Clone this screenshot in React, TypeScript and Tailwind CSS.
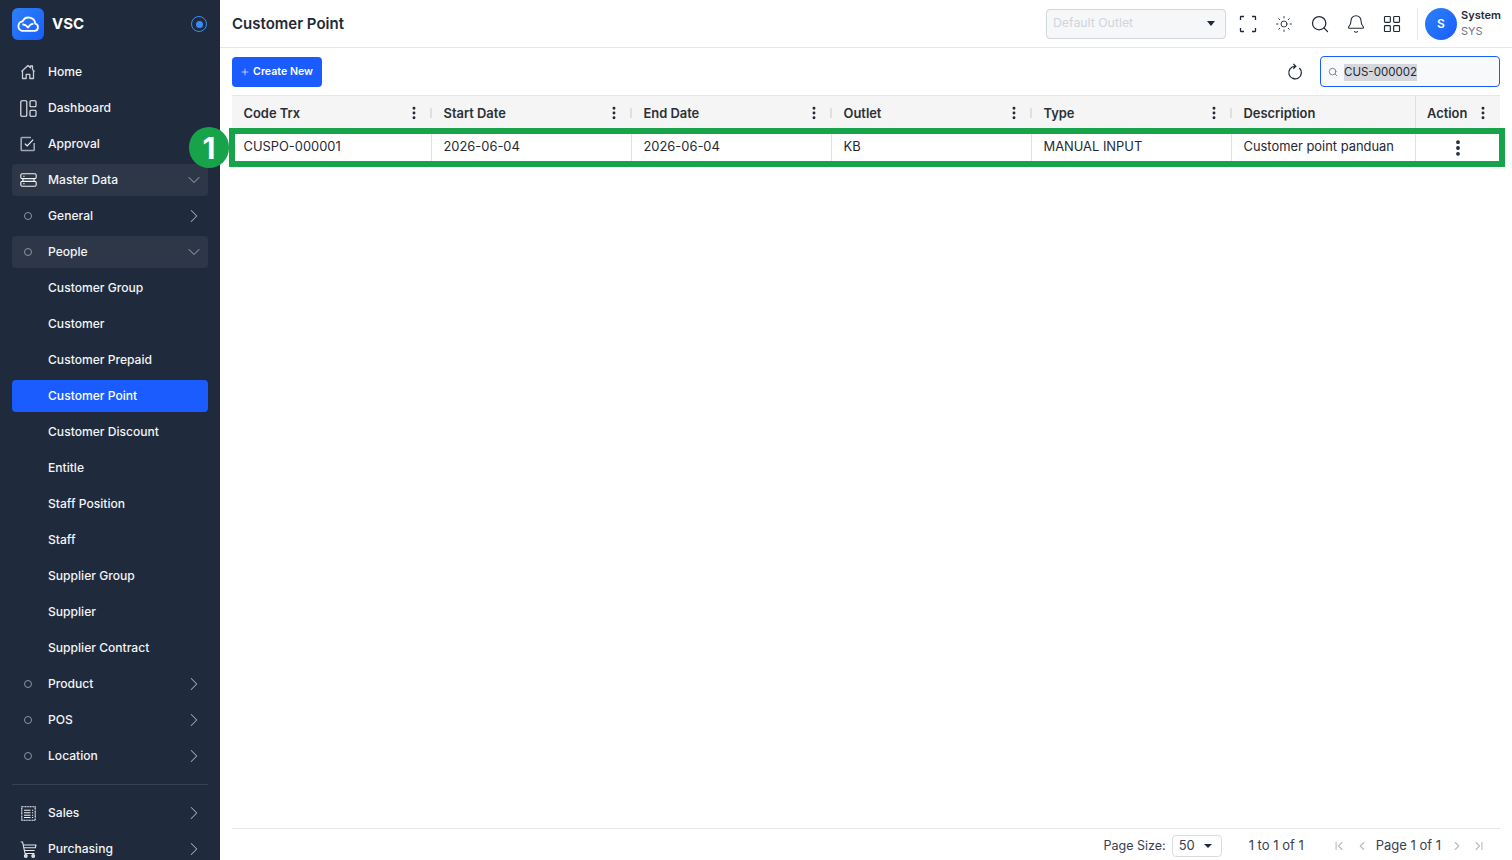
import {
  Bell,
  ChevronDown,
  ChevronFirst,
  ChevronLast,
  ChevronLeft,
  ChevronRight,
  EllipsisVertical,
  LayoutGrid,
  Plus,
  Search,
  Sun,
} from "lucide-react";
import type { ReactNode } from "react";

function Dot() {
  return <span className="h-2 w-2 rounded-full border border-[#8b95a5]" />;
}

function HomeIcon() {
  return (
    <svg width="16" height="16" viewBox="0 0 16 16" fill="none" stroke="#c9ced6" strokeWidth="1.3" strokeLinejoin="round">
      <path d="M1.5 7.5 8 1.5l2.5 2.3V2h2v3.6l2 1.9" />
      <path d="M2.5 6.8V14.5h3.7v-4.2h3.6v4.2h3.7V6.8" />
    </svg>
  );
}

function DashIcon() {
  return (
    <svg width="17" height="17" viewBox="0 0 17 17" fill="none" stroke="#f3f4f6" strokeWidth="1.1">
      <rect x="0.8" y="0.8" width="6" height="15.4" rx="1" />
      <rect x="10" y="0.8" width="6" height="6" rx="1" />
      <rect x="10" y="10.2" width="6" height="6" rx="1" />
    </svg>
  );
}

function ApprovalIcon() {
  return (
    <svg width="16" height="16" viewBox="0 0 16 16" fill="none" strokeWidth="1.2">
      <path d="M11 1.5H2a.8.8 0 0 0-.8.8v11.4a.8.8 0 0 0 .8.8h11.4a.8.8 0 0 0 .8-.8V7" stroke="#a2a8b2" strokeWidth="1.6" />
      <path d="m4.8 7.6 2.4 2.3 6-6.2" stroke="#f3f4f6" />
    </svg>
  );
}

function MasterIcon() {
  return (
    <svg width="17" height="14" viewBox="0 0 17 14" fill="none" stroke="#f3f4f6" strokeWidth="1.1">
      <rect x="0.8" y="0.8" width="15.4" height="4.8" rx="1.4" />
      <rect x="0.8" y="8.4" width="15.4" height="4.8" rx="1.4" />
      <path d="M3 5.6v2.8M14 5.6v2.8M3.2 3.2h1.4M3.2 10.8h1.4" />
    </svg>
  );
}

function SalesIcon() {
  return (
    <svg width="15" height="15" viewBox="0 0 15 15" fill="none" stroke="#f3f4f6" strokeWidth="1.1">
      <rect x="0.8" y="0.8" width="13.4" height="13.4" strokeDasharray="1.2 0.4" />
      <path d="M3 4.2h6.5M3 6.7h6.5M3 9.2h6.5M3 11.5h6.5M11 4.2h1.2M11 6.7h1.2M11 9.2h1.2M11 11.5h1.2" />
    </svg>
  );
}

function CartIcon() {
  return (
    <svg width="17" height="17" viewBox="0 0 17 17" fill="none" stroke="#e5e7eb" strokeWidth="1.1" strokeLinejoin="round">
      <path d="M0.8 1h1.8l2.4 11.5h9.5" />
      <path d="M3.3 4h12.7l-.7 2.8H3.9M4.4 9.5h10.2" />
      <circle cx="5.8" cy="15" r="1.4" fill="#c9ced6" />
      <circle cx="13.2" cy="15" r="1.4" fill="#c9ced6" />
    </svg>
  );
}

function NavItem({
  icon,
  label,
  arrow,
  open,
  active,
}: {
  icon?: ReactNode;
  label: string;
  arrow?: "right" | "down";
  open?: boolean;
  active?: boolean;
}) {
  return (
    <div
      className={`flex h-8 shrink-0 items-center rounded-[4px] pr-[3px] text-[12.1px] leading-none font-medium ${
        active ? "bg-[#1a5cff] text-white" : open ? "bg-[#2d3748] text-[#f3f4f6]" : "text-[#f3f4f6]"
      }`}
    >
      <span className="mr-1 flex w-8 shrink-0 items-center justify-center">{icon}</span>
      <span className="flex-1">{label}</span>
      <span className="flex w-[22px] justify-center">
        {arrow === "right" && <ChevronRight className="h-[22px] w-[22px] text-[#a7adb7]" strokeWidth={1.1} />}
        {arrow === "down" && <ChevronDown className="h-5 w-5 text-[#a7adb7]" strokeWidth={1.2} />}
      </span>
    </div>
  );
}

function Sidebar() {
  const people = [
    "Customer Group",
    "Customer",
    "Customer Prepaid",
    "Customer Point",
    "Customer Discount",
    "Entitle",
    "Staff Position",
    "Staff",
    "Supplier Group",
    "Supplier",
    "Supplier Contract",
  ];

  return (
    <aside className="flex h-full w-[220px] shrink-0 flex-col overflow-hidden bg-[#1f2a3c] px-3">
      {/* Logo */}
      <div className="flex h-12 shrink-0 items-center">
        <div className="flex h-8 w-8 items-center justify-center rounded-md bg-gradient-to-br from-[#2f80f5] to-[#1a5cff]">
          <svg width="24" height="18" viewBox="0 0 24 18" fill="none" stroke="white" strokeWidth="1.8" strokeLinejoin="round">
            <path d="M6 15.8h12.5a3.6 3.6 0 0 0 .7-7.1 6.6 6.6 0 0 0-12.6-2.3A4.8 4.8 0 0 0 6 15.8Z" />
            <path d="M6.4 9.6c2.4-.6 4.2 1 5.6 3 1.2-2.2 3-3.8 5.4-4" />
          </svg>
        </div>
        <span className="ml-2 flex-1 text-[15px] font-bold text-white">VSC</span>
        <span className="mr-px flex h-4 w-4 items-center justify-center rounded-full border border-[#3b8cf0]">
          <span className="h-[7px] w-[7px] rounded-full bg-[#3b8cf0]" />
        </span>
      </div>

      <nav className="mt-2 flex flex-col gap-1">
        <NavItem icon={<HomeIcon />} label="Home" />
        <NavItem icon={<DashIcon />} label="Dashboard" />
        <NavItem icon={<ApprovalIcon />} label="Approval" />
        <NavItem icon={<MasterIcon />} label="Master Data" arrow="down" open />
        <NavItem icon={<Dot />} label="General" arrow="right" />
        <NavItem icon={<Dot />} label="People" arrow="down" open />
        {people.map((name) => (
          <NavItem key={name} label={name} active={name === "Customer Point"} />
        ))}
        <NavItem icon={<Dot />} label="Product" arrow="right" />
        <NavItem icon={<Dot />} label="POS" arrow="right" />
        <NavItem icon={<Dot />} label="Location" arrow="right" />
      </nav>

      <div className="mt-[12px] mb-3 shrink-0 border-t border-[#374151]" />

      <nav className="flex flex-col gap-1">
        <NavItem icon={<SalesIcon />} label="Sales" arrow="right" />
        <NavItem icon={<CartIcon />} label="Purchasing" arrow="right" />
      </nav>
    </aside>
  );
}

function TopBar() {
  const iconClass = "h-5 w-5 text-[#1f2937]";
  return (
    <header className="flex h-12 shrink-0 items-center border-b border-[#e5e7eb] px-3">
      <h1 className="flex-1 pt-[2px] text-[15px] font-semibold text-[#1f2937]">Customer Point</h1>

      <div className="flex h-[30px] w-[180px] items-center rounded border border-[#d1d5db] bg-[#f6f7f9] pr-[10px] pb-px pl-[6px] text-[12.3px] text-[#d1d5db]">
        <span className="flex-1">Default Outlet</span>
        <span className="h-0 w-0 border-x-[4px] border-t-[5px] border-x-transparent border-t-[#1f2937]" />
      </div>

      <div className="ml-3 flex items-center gap-4">
        <svg width="20" height="20" viewBox="0 0 20 20" fill="none" stroke="#1f2937" strokeWidth="1.3">
          <path d="M2.5 6V3a.5.5 0 0 1 .5-.5h3M14 2.5h3a.5.5 0 0 1 .5.5v3M17.5 14v3a.5.5 0 0 1-.5.5h-3M6 17.5H3a.5.5 0 0 1-.5-.5v-3" />
        </svg>
        <span className="flex w-5 justify-center">
          <Sun className="h-[18px] w-[18px] text-[#1f2937]" strokeWidth={1.2} />
        </span>
        <Search className={iconClass} strokeWidth={1.5} />
        <Bell className={iconClass} strokeWidth={1.3} />
        <LayoutGrid className={iconClass} strokeWidth={1.4} />
      </div>

      <div className="ml-[15px] flex h-8 items-center gap-1 border-l border-[#e5e7eb] pl-[7px]">
        <span className="flex h-8 w-8 items-center justify-center rounded-full bg-gradient-to-br from-[#2f80f5] to-[#1a5cff] text-xs font-semibold text-white">
          S
        </span>
        <div className="flex w-[39px] flex-col pb-[2px] text-[11px] leading-4">
          <span className="whitespace-nowrap font-semibold text-[#1f2937]">System</span>
          <span className="text-[#6b7280]">SYS</span>
        </div>
      </div>
    </header>
  );
}

function HeaderCell({ label, width }: { label: string; width: string }) {
  return (
    <div className={`relative flex items-center pr-[10px] pl-[11.5px] ${width}`}>
      <span className="flex-1 pt-[2px] font-semibold text-[#2b3038]">{label}</span>
      <EllipsisVertical className="h-4 w-4 text-[#1f2937]" strokeWidth={2.4} />
      <span className="absolute right-0 h-[10px] w-[2px] bg-[#dcdfe3]" />
    </div>
  );
}

function DataCell({ children, width }: { children: ReactNode; width: string }) {
  return (
    <div className={`flex items-center border-r border-[#dde0e4] pt-[2px] pl-[11.5px] text-[#1f2937] ${width}`}>
      {children}
    </div>
  );
}

function CustomerTable() {
  return (
    <div className="mx-3 flex min-h-0 flex-1 flex-col text-[12.9px]">
      <div className="flex h-[35px] shrink-0 border-y border-[#e5e7eb] bg-[#f5f5f5]">
        <HeaderCell label="Code Trx" width="w-[200px]" />
        <HeaderCell label="Start Date" width="w-[200px]" />
        <HeaderCell label="End Date" width="w-[200px]" />
        <HeaderCell label="Outlet" width="w-[200px]" />
        <HeaderCell label="Type" width="w-[200px]" />
        <div className="flex w-[183px] items-center pt-[2px] pl-[11.5px] font-semibold text-[#2b3038]">Description</div>
        <div className="flex flex-1 items-center border-l border-[#dde0e4] pr-[9px] pl-[11px]">
          <span className="flex-1 pt-[2px] font-semibold text-[#2b3038]">Action</span>
          <EllipsisVertical className="h-4 w-4 text-[#1f2937]" strokeWidth={2.4} />
        </div>
      </div>

      <div className="flex h-[32px] shrink-0">
        <DataCell width="w-[200px]">CUSPO-000001</DataCell>
        <DataCell width="w-[200px]">2026-06-04</DataCell>
        <DataCell width="w-[200px]">2026-06-04</DataCell>
        <DataCell width="w-[200px]">KB</DataCell>
        <DataCell width="w-[200px]">MANUAL INPUT</DataCell>
        <DataCell width="w-[184px]">Customer point panduan</DataCell>
        <div className="flex flex-1 items-center justify-center pt-1">
          <EllipsisVertical className="h-5 w-5 text-[#1f2937]" strokeWidth={2.6} />
        </div>
      </div>
    </div>
  );
}

function Pagination() {
  const arrow = "h-[14px] w-[14px] text-[#b8bcc3]";
  return (
    <footer className="mx-3 flex h-[32px] shrink-0 items-center justify-end border-t border-[#e5e7eb] pt-[3px] pr-[14px] text-[13px] text-[#374151]">
      <span className="text-[12.5px]">Page Size:</span>
      <div className="ml-[6px] flex h-[22px] w-[50px] items-center justify-between rounded border border-[#d9dce1] pr-[9px] pl-[6px]">
        <span>50</span>
        <span className="h-0 w-0 border-x-[4px] border-t-[4px] border-x-transparent border-t-[#1f2937]" />
      </div>
      <span className="ml-[27px]">1 to 1 of 1</span>
      <ChevronFirst className={`ml-[28px] ${arrow}`} />
      <ChevronLeft className={`ml-[9px] ${arrow}`} />
      <span className="mr-[9px] ml-[7px]">Page 1 of 1</span>
      <ChevronRight className={arrow} />
      <ChevronLast className={`ml-2 ${arrow}`} />
    </footer>
  );
}

export default function App() {
  return (
    <div className="relative flex h-[860px] w-[1512px] overflow-hidden bg-white font-['Inter',sans-serif]">
      <Sidebar />

      <main className="flex min-w-0 flex-1 flex-col">
        <TopBar />

        {/* Toolbar */}
        <div className="flex h-[47px] shrink-0 items-center justify-between px-3">
          <button className="flex h-[30px] w-[90px] items-center justify-center gap-[3px] rounded bg-[#1a5cff] pt-px pr-px text-[10.6px] font-semibold text-white">
            <Plus className="h-[10px] w-[10px] opacity-80" />
            Create New
          </button>
          <div className="flex items-center gap-4">
            <svg width="18" height="18" viewBox="0 0 18 18" fill="none" stroke="#1f2937" strokeWidth="1.3">
              <path d="M13.4 5A6.3 6.3 0 1 1 9 3.3" />
              <path d="M7.3 0.9 9.8 3.3 7.3 5.7" />
            </svg>
            <div className="flex h-[31px] w-[180px] items-center gap-[6px] rounded border border-[#1a5cff] bg-[#f8f9fb] pl-[7px] text-[11.5px] text-[#1f2937]">
              <Search className="h-[10px] w-[10px] text-[#6b7280]" />
              <span className="mt-[2px] bg-[#d4d7dc]">CUS-000002</span>
            </div>
          </div>
        </div>

        <CustomerTable />
        <Pagination />
      </main>

      {/* Annotation over the first row */}
      <div className="pointer-events-none absolute top-[128px] left-[229px] h-[39px] w-[1276px] border-[6px] border-[#16a34a]" />
      <div className="pointer-events-none absolute top-[127px] left-[189px] flex h-[41px] w-[40px] items-center justify-center rounded-full bg-[#16a34a] pt-[2px] text-[30px] font-bold text-white">
        1
      </div>
    </div>
  );
}
